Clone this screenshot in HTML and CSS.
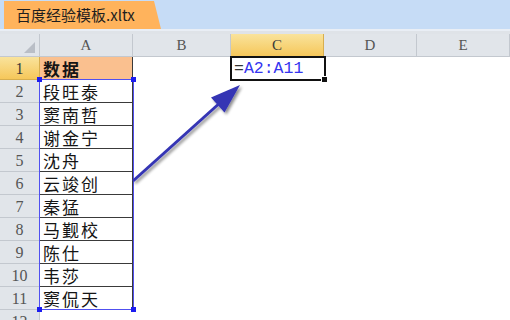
FILE: index.html
```html
<!DOCTYPE html>
<html>
<head>
<meta charset="utf-8">
<link rel="stylesheet" href="styles.css">
</head>
<body>
<div class="app">
  <div class="tabbar">
    <div class="tab">百度经验模板.xltx</div>
  </div>
  <div class="strip"></div>
  <div class="sheet">
    <div class="grid">
      <div class="hd corner"><span class="tri"></span></div>
      <div class="hd col">A</div>
      <div class="hd col">B</div>
      <div class="hd col sel">C</div>
      <div class="hd col">D</div>
      <div class="hd col">E</div>

      <div class="hd row sel">1</div>
      <div class="c a head">数据</div>
      <div class="c"></div>
      <div class="c f"><span class="eq">=</span><span class="ref">A2:A11</span></div>
      <div class="c"></div>
      <div class="c"></div>

      <div class="hd row">2</div><div class="c a">段旺泰</div><div class="c"></div><div class="c"></div><div class="c"></div><div class="c"></div>
      <div class="hd row">3</div><div class="c a">窦南哲</div><div class="c"></div><div class="c"></div><div class="c"></div><div class="c"></div>
      <div class="hd row">4</div><div class="c a">谢金宁</div><div class="c"></div><div class="c"></div><div class="c"></div><div class="c"></div>
      <div class="hd row">5</div><div class="c a">沈舟</div><div class="c"></div><div class="c"></div><div class="c"></div><div class="c"></div>
      <div class="hd row">6</div><div class="c a">云竣创</div><div class="c"></div><div class="c"></div><div class="c"></div><div class="c"></div>
      <div class="hd row">7</div><div class="c a">秦猛</div><div class="c"></div><div class="c"></div><div class="c"></div><div class="c"></div>
      <div class="hd row">8</div><div class="c a">马觐校</div><div class="c"></div><div class="c"></div><div class="c"></div><div class="c"></div>
      <div class="hd row">9</div><div class="c a">陈仕</div><div class="c"></div><div class="c"></div><div class="c"></div><div class="c"></div>
      <div class="hd row">10</div><div class="c a">韦莎</div><div class="c"></div><div class="c"></div><div class="c"></div><div class="c"></div>
      <div class="hd row">11</div><div class="c a">窦侃天</div><div class="c"></div><div class="c"></div><div class="c"></div><div class="c"></div>
      <div class="hd row">12</div><div class="c"></div><div class="c"></div><div class="c"></div><div class="c"></div><div class="c"></div>
    </div>

    <div class="range">
      <span class="h tl"></span><span class="h tr"></span><span class="h bl"></span><span class="h br"></span>
    </div>
    <div class="active"><span class="fill"></span></div>

    <svg class="arrow" width="510" height="284" viewBox="0 36 510 284">
      <defs>
        <filter id="sh" x="-20%" y="-20%" width="140%" height="140%">
          <feGaussianBlur in="SourceAlpha" stdDeviation="1.5"/>
          <feOffset dx="2" dy="2"/>
          <feComponentTransfer><feFuncA type="linear" slope="0.45"/></feComponentTransfer>
          <feMerge><feMergeNode/><feMergeNode in="SourceGraphic"/></feMerge>
        </filter>
      </defs>
      <g filter="url(#sh)">
        <line x1="133" y1="183" x2="222" y2="103" stroke="#3434b4" stroke-width="3"/>
        <polygon points="240,87 224.5,114.5 211,99.5" fill="#3434b4"/>
      </g>
    </svg>
  </div>
</div>
</body>
</html>
```
FILE: styles.css
```css
html, body {
  margin: 0;
  padding: 0;
  background: #ffffff;
}
.app {
  width: 510px;
  height: 320px;
  overflow: hidden;
}
.tabbar {
  height: 31px;
  background: #c6dcf6;
  padding: 3px 0 0 4px;
  box-sizing: border-box;
  display: flex;
  align-items: flex-end;
  border-bottom: 2px solid #e9eef5;
}
.tab {
  width: 157px;
  height: 28px;
  background: #ffb35c;
  clip-path: polygon(0 0, 150px 0, 157px 100%, 0 100%);
  font-family: "Noto Sans CJK SC", "Noto Sans", sans-serif;
  font-size: 15px;
  color: #1e1e1e;
  line-height: 28px;
  padding-left: 12px;
  box-sizing: border-box;
  white-space: nowrap;
}
.strip {
  height: 3px;
  background: #dfe3e8;
}
.sheet {
  position: relative;
}
.grid {
  display: grid;
  grid-template-columns: 40px 93px 98px 93px 93px 93px;
  grid-template-rows: 23px repeat(12, 23px);
}
.hd {
  background: #e1e5ea;
  border-right: 1px solid #c3c8cf;
  border-bottom: 1px solid #c3c8cf;
  box-sizing: border-box;
  font-family: "Liberation Serif", serif;
  color: #555555;
  display: flex;
  align-items: center;
  justify-content: center;
}
.hd.col {
  font-size: 15px;
  padding-top: 1px;
}
.hd.row {
  font-size: 16px;
  padding-top: 1px;
}
.hd.sel {
  background: linear-gradient(#f9e39c, #f6c75a);
  color: #3a3a3a;
  border-color: #d7ae4f;
}
.corner {
  position: relative;
}
.tri {
  position: absolute;
  right: 4px;
  bottom: 3px;
  width: 0;
  height: 0;
  border-left: 11px solid transparent;
  border-bottom: 11px solid #b9bec6;
}
.c {
  box-sizing: border-box;
  font-family: "Noto Sans CJK SC", "Noto Sans", sans-serif;
  font-size: 17px;
  line-height: 23px;
  color: #151515;
  white-space: nowrap;
}
.c.a {
  border-right: 1px solid #3a3a3a;
  border-bottom: 1px solid #3a3a3a;
  padding-left: 3px;
  letter-spacing: 2px;
}
.c.head {
  background: #fac08f;
  font-weight: bold;
}
.c.f {
  font-family: "Liberation Mono", "DejaVu Sans Mono", monospace;
  font-size: 16.5px;
  line-height: 23px;
  padding-left: 3px;
}
.eq { color: #333333; }
.ref { color: #3535f0; }

.range {
  position: absolute;
  left: 39px;
  top: 45px;
  width: 95px;
  height: 231px;
  border: 1px solid #5050f0;
  box-sizing: border-box;
}
.h {
  position: absolute;
  width: 5px;
  height: 5px;
  background: #1c1cf0;
}
.h.tl { left: -3px; top: -3px; }
.h.tr { right: -3px; top: -3px; }
.h.bl { left: -3px; bottom: -3px; }
.h.br { right: -3px; bottom: -3px; }

.active {
  position: absolute;
  left: 230px;
  top: 22px;
  width: 96px;
  height: 25px;
  border: 2px solid #111111;
  box-sizing: border-box;
}
.fill {
  position: absolute;
  right: -4px;
  bottom: -4px;
  width: 5px;
  height: 5px;
  background: #111;
  border: 1px solid #fff;
}
.arrow {
  position: absolute;
  left: 0;
  top: 0;
  pointer-events: none;
}
```
